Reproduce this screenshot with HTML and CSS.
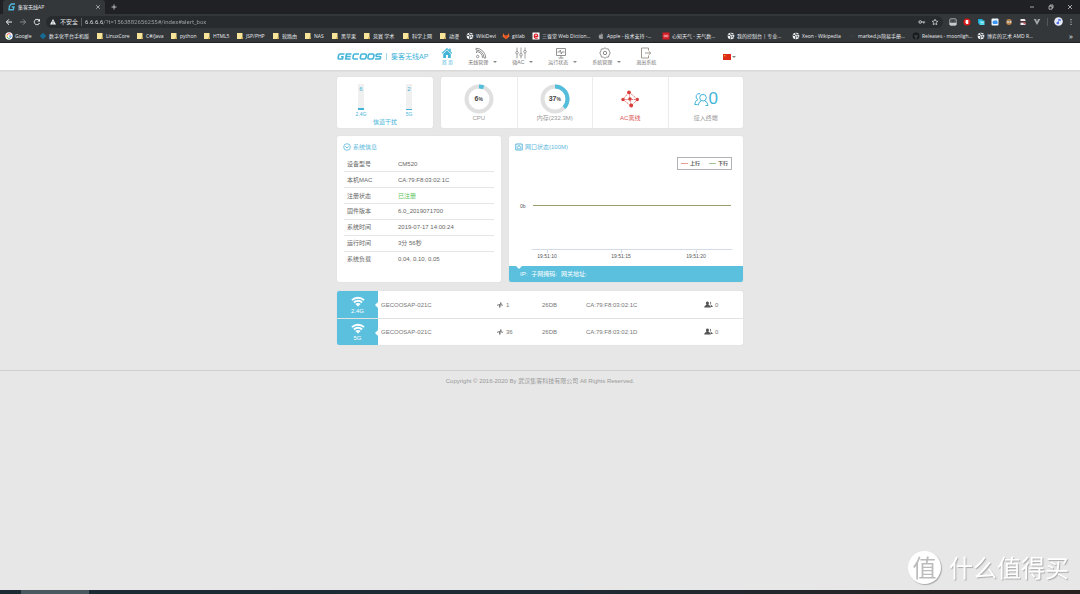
FILE: index.html
```html
<!DOCTYPE html>
<html lang="zh-CN">
<head>
<meta charset="utf-8">
<title>集客无线AP</title>
<link rel="stylesheet" href="styles.css">
</head>
<body>
<svg class="defs" aria-hidden="true">
  <symbol id="folder" viewBox="0 0 8 8"><path d="M1 1h5.500v6H1z" fill="#f8e59a"/><path d="M5 5.500h2v1.500H5z" fill="#d8b24a"/></symbol>
  <symbol id="globe" viewBox="0 0 8 8"><circle cx="4" cy="4" r="3.300" fill="#f1f3f4"/><path d="M1 3.200l2 .3 1 1.300-.6 1.900M4 1l-.5 1.300 1.700.6L6.800 2.500M5 4.600l1.600.6" stroke="#3a3d41" stroke-width="1" fill="none"/></symbol>
  <symbol id="wifi" viewBox="0 0 14 11"><g fill="none" stroke="#fff" stroke-width="1.900"><path d="M1 4.200a8.500 8.500 0 0 1 12 0"/><path d="M3 6.500a5.600 5.600 0 0 1 8 0"/><path d="M5 8.700a2.800 2.800 0 0 1 4 0"/></g><path d="M5.800 9.300L7 10.700l1.200-1.400a1.700 1.700 0 0 0-2.400 0z" fill="#fff"/></symbol>
  <symbol id="pulse" viewBox="0 0 6 6"><path d="M0 3.200h1.400L2.300 2l.5 3.500L3.800.5l.6 2.700H6" fill="none" stroke="#666" stroke-width=".8"/></symbol>
  <symbol id="people" viewBox="0 0 9 7"><path d="M6 .8c1.200 0 1.500 1.600.8 2.600.2.800 1.900.9 2 2.600H7" fill="#555"/><path d="M3.400.4c1.600 0 2 2 1 3.200.2.900 2.400 1 2.600 3H.2c.1-2 2-2.100 2.300-3C1.400 2.400 1.900.4 3.400.4z" fill="#555"/></symbol>
</svg>

<div class="tabs">
  <div class="tab">
    <svg class="tab-icon" viewBox="0 0 8 8"><path d="M7 1H3.500L1.500 3 1 6.800h4.300L6 4H3.700" fill="none" stroke="#4fb8dd" stroke-width="1.400"/></svg>
    <span class="tab-title">集客无线AP</span>
    <button class="plain" aria-label="关闭标签"><svg viewBox="0 0 6 6" width="6" height="6"><path d="M1.200 1.200l3.600 3.600M4.800 1.200L1.200 4.800" stroke="#c5c7ca" stroke-width=".7"/></svg></button>
  </div>
  <button class="plain new-tab" aria-label="新标签"><svg viewBox="0 0 6 6" width="6" height="6"><path d="M3 .5v5M.5 3h5" stroke="#dfe1e3" stroke-width=".8"/></svg></button>
  <div class="window-buttons">
    <button class="plain" aria-label="最小化"><svg viewBox="0 0 6 6" width="6" height="6"><path d="M1 3h4" stroke="#ddd" stroke-width=".7"/></svg></button>
    <button class="plain" aria-label="还原"><svg viewBox="0 0 6 6" width="6" height="6"><path d="M1 2.200h3v3H1zM2 2V1h3v3H4" fill="none" stroke="#ddd" stroke-width=".7"/></svg></button>
    <button class="plain" aria-label="关闭"><svg viewBox="0 0 6 6" width="6" height="6"><path d="M1 1l4 4M5 1L1 5" stroke="#ddd" stroke-width=".7"/></svg></button>
  </div>
</div>

<div class="toolbar">
  <button class="plain" aria-label="后退"><svg viewBox="0 0 8 8" width="8" height="8"><path d="M7 4H1.500M4 1.300L1.300 4 4 6.700" fill="none" stroke="#f1f3f4"/></svg></button>
  <button class="plain" aria-label="前进"><svg viewBox="0 0 8 8" width="8" height="8"><path d="M1 4h5.500M4 1.300L6.700 4 4 6.700" fill="none" stroke="#85898c"/></svg></button>
  <button class="plain" aria-label="刷新"><svg viewBox="0 0 8 8" width="8" height="8"><path d="M6.500 5A2.700 2.700 0 1 1 6 2.200" fill="none" stroke="#f1f3f4"/><path d="M7 .8v2.700H4.300z" fill="#f1f3f4"/></svg></button>
  <label class="address">
    <svg viewBox="0 0 8 8" width="8" height="8"><path d="M4 1l3 5.500H1z" fill="#f1f3f4"/><path d="M4 3v1.700M4 5.200V6" stroke="#333" stroke-width=".6"/></svg>
    <span class="insecure">不安全</span>
    <input class="url" type="text" value="6.6.6.6/?t=1563882656255#/index#alert_box">
    <svg viewBox="0 0 8 8" width="8" height="8"><circle cx="2.200" cy="4" r="1.300" fill="none" stroke="#d5d7d9" stroke-width=".9"/><path d="M3.500 4h3.700M5.800 4v1.500" stroke="#d5d7d9" stroke-width=".9"/></svg>
    <svg viewBox="0 0 8 8" width="8" height="8"><path d="M4 1.200l.9 1.900 2 .2-1.500 1.400.4 2L4 5.700l-1.800 1 .4-2L1.100 3.300l2-.2z" fill="none" stroke="#e0e2e4" stroke-width=".7"/></svg>
  </label>
  <div class="extensions">
    <svg viewBox="0 0 8 8"><rect x=".8" y=".8" width="6.400" height="6.400" rx="1" fill="none" stroke="#c8cacc" stroke-width=".8"/><path d="M1 5h6v2H1zM2.500 3h.8M4.800 3h.8" fill="#c8cacc" stroke="#c8cacc" stroke-width=".7"/></svg>
    <svg viewBox="0 0 8 8"><circle cx="4" cy="4" r="3.500" fill="#df1818"/><path d="M2.700 2h2.600v4H3.400L2.500 4.500" fill="#fff"/></svg>
    <svg viewBox="0 0 8 8"><path d="M1 1h4.500v4.500H1z" fill="#19a9d9"/><path d="M2.500 2.500h5V7h-5z" fill="#55d8ee"/><path d="M4 4.500h2.500" stroke="#fff" stroke-width=".6"/></svg>
    <svg viewBox="0 0 8 8"><rect x=".5" y=".5" width="7" height="7" rx="1" fill="#eef6ff"/><circle cx="3.300" cy="4.200" r="1.700" fill="#3995ef"/><circle cx="5" cy="3.700" r="1.500" fill="#3995ef"/><path d="M2 4h4.500v2H2z" fill="#3995ef"/></svg>
    <svg viewBox="0 0 8 8"><circle cx="4" cy="4" r="2.900" fill="#b98346"/><path d="M1.300 3.500h5.400" stroke="#556ca0"/><circle cx="3" cy="4" r=".9" fill="#e9dcc6"/><circle cx="5.300" cy="4" r=".9" fill="#e9dcc6"/></svg>
    <svg viewBox="0 0 8 8"><path d="M1.500 1h4l1 1v5h-5z" fill="#eee"/><path d="M1 3h6v1.700H1z" fill="#553038"/><path d="M4.500 5.700h2" stroke="#d33"/></svg>
    <svg viewBox="0 0 8 8"><path d="M.7 1h2L4 3.500 5.300 1h2L4 7z" fill="#a9adaf"/><path d="M2.700 1L4 3.300 5.300 1z" fill="#565b5e"/></svg>
  </div>
  <svg class="avatar" viewBox="0 0 9 9"><circle cx="4.500" cy="4.500" r="4.300" fill="#e7ebf7"/><path d="M4.600 6V2l2 .5v1.300l-1.400-.3" fill="#4a6de0" stroke="#4a6de0" stroke-width=".4"/><circle cx="3.800" cy="6" r="1.300" fill="#4a6de0"/></svg>
  <button class="plain" aria-label="菜单"><svg viewBox="0 0 4 8" width="4" height="8"><g fill="#e0e2e4"><circle cx="2" cy="1.700" r=".6"/><circle cx="2" cy="4" r=".6"/><circle cx="2" cy="6.300" r=".6"/></g></svg></button>
</div>

<nav class="bookmarks" aria-label="书签">
  <a href="#"><svg viewBox="0 0 8 8"><circle cx="4" cy="4" r="3.700" fill="#fff"/><g fill="none"><path d="M2 3a2.200 2.200 0 0 1 3.600-.6" stroke="#ea4335"/><path d="M2 3v2" stroke="#fbbc05"/><path d="M2 5a2.200 2.200 0 0 0 3.500.7" stroke="#34a853"/><path d="M4 4h2.200q0 1-.8 1.700" stroke="#4285f4"/></g></svg>Google</a>
  <a href="#"><svg viewBox="0 0 8 8"><path d="M4 .7L7.300 4 4 7.300.7 4z" fill="#176b94"/></svg>数字化平台手机版</a>
  <a href="#"><svg><use href="#folder"/></svg>LinuxCore</a>
  <a href="#"><svg><use href="#folder"/></svg>C#/Java</a>
  <a href="#"><svg><use href="#folder"/></svg>python</a>
  <a href="#"><svg><use href="#folder"/></svg>HTML5</a>
  <a href="#"><svg><use href="#folder"/></svg>JSP/PHP</a>
  <a href="#"><svg><use href="#folder"/></svg>软路由</a>
  <a href="#"><svg><use href="#folder"/></svg>NAS</a>
  <a href="#"><svg><use href="#folder"/></svg>黑苹果</a>
  <a href="#"><svg><use href="#folder"/></svg>竞赛 学术</a>
  <a href="#"><svg><use href="#folder"/></svg>科学上网</a>
  <a href="#"><svg><use href="#folder"/></svg>动漫</a>
  <a href="#"><svg><use href="#globe"/></svg>WikiDevi</a>
  <a href="#"><svg viewBox="0 0 8 8"><path d="M1.500 1l1 2.500h3l1-2.500L7.500 4.500 4 7.300.5 4.500z" fill="#f36c28"/><path d="M2.500 3.500h3L4 7.300z" fill="#df4328"/></svg>gitlab</a>
  <a href="#"><svg viewBox="0 0 8 8"><path d="M.5.500h7v7h-7z" fill="#fff"/><path d="M2.300 4.300H5.700Q5.700 2 4 2T2.300 4.200 4.200 6.200H5.700" fill="none" stroke="#d9202a" stroke-width="1.200"/></svg>三省堂 Web Diction...</a>
  <a href="#"><svg viewBox="0 0 8 8"><path d="M4 2.600c1.200-.7 2-.2 2.200.3-1 .8-.7 1.900.2 2.300C5.600 7.300 5 7 4 6.700 2.600 7.400 1.600 6 1.700 4.300 1.900 2.500 3 2.200 4 2.600zM4 2.200Q4 1 5 .7 5 1.800 4 2.200" fill="#999"/></svg>Apple - 技术支持 -...</a>
  <a href="#"><svg viewBox="0 0 8 8"><path d="M.5.500h7v7h-7z" fill="#d51c24"/><circle cx="2.800" cy="4" r="1" fill="none" stroke="#fff" stroke-width=".5"/><circle cx="5.200" cy="4" r="1" fill="none" stroke="#fff" stroke-width=".5"/></svg>心知天气 - 天气数...</a>
  <a href="#"><svg><use href="#globe"/></svg>我的控制台 | 专业...</a>
  <a href="#"><svg><use href="#globe"/></svg>Xeon - Wikipedia</a>
  <a href="#"><svg viewBox="0 0 8 8"><path d="M1 4h5" stroke="#44474a" stroke-width=".6"/></svg>marked.js简易手册...</a>
  <a href="#"><svg viewBox="0 0 8 8"><circle cx="4" cy="4" r="3.400" fill="#17191b"/><path d="M2.300 2.500l1 .4h1.400l1-.4v2.200L4.800 5.500v1.700H3.200V5.500L2.300 4.700z" fill="#3a3d41"/></svg>Releases - moonligh...</a>
  <a href="#"><svg><use href="#globe"/></svg>博弈的艺术 AMD R...</a>
  <button class="plain more" aria-label="更多书签">»</button>
</nav>

<header class="site-header">
  <div class="container header-row">
    <div class="brand">
      <svg viewBox="0 0 46 9" class="logo" role="img" aria-label="GECOOS"><g fill="none" stroke="#43b4d8" stroke-width="1.600" stroke-linejoin="round">
        <path d="M7.500 2H3.200Q2 2 1.600 3.300L1.200 5.700Q1 7 2.300 7H5.500L6 4.700H4"/>
        <path d="M14.500 2H9.500L8.600 7h5M9.200 4.500h4.500"/>
        <path d="M22 2h-4Q16.600 2 16.300 3.500l-.3 2Q15.800 7 17.200 7h3.700"/>
        <path d="M25.200 2h2.800q1.600 0 1.300 1.600l-.3 1.800Q28.800 7 27.200 7h-2.600q-1.500 0-1.200-1.600l.3-1.800Q23.900 2 25.200 2z"/>
        <path d="M32.800 2h2.800q1.600 0 1.300 1.600l-.3 1.800Q36.400 7 34.800 7h-2.600q-1.500 0-1.200-1.600l.3-1.800Q31.500 2 32.800 2z"/>
        <path d="M45 2h-4.500q-1.200 0-1.400 1.200-.2 1.300 1 1.300H42.500q1.300 0 1.100 1.300Q43.400 7 42.200 7H38"/></g></svg>
      <span class="brand-name">集客无线AP</span>
    </div>
    <nav class="menu" aria-label="主菜单">
      <a href="#" class="active"><svg viewBox="0 0 12 12"><path d="M6 1L.7 6l.8.800L6 2.600l4.500 4.200.8-.8L9.700 4.500V1.600H8.300v1.500z" fill="#43b4d8"/><path d="M6 3.300L2.200 7v4H5V8h2v3h2.800V7z" fill="#43b4d8"/></svg><span>首 页</span></a>
      <a href="#" class="drop"><svg viewBox="0 0 12 12"><g fill="none" stroke="#888" stroke-width=".9"><path d="M1 3V1.200A10 10 0 0 1 10.800 11H9A8 8 0 0 0 1 3M1.500 6V4.500A6.200 6.200 0 0 1 7.500 11"/><circle cx="2.700" cy="9.500" r="1.200"/></g></svg><span>无线管理</span></a>
      <a href="#" class="drop"><svg viewBox="0 0 12 12"><g fill="none" stroke="#888" stroke-width=".8"><path d="M2 .5v4M2 7v4.500M6 .5v6M6 9v2.500M10 .5v3M10 6v5.500"/><circle cx="2" cy="5.700" r="1.300"/><circle cx="6" cy="7.800" r="1.300"/><circle cx="10" cy="4.700" r="1.300"/></g></svg><span>微AC</span></a>
      <a href="#" class="drop"><svg viewBox="0 0 12 12"><path d="M1.500 1.500h9v7h-9zM6 8.500V11M3.500 11h5M2.500 5h2L5.300 3l1 4 .8-2h2.400" fill="none" stroke="#888" stroke-width=".9"/></svg><span>运行状态</span></a>
      <a href="#" class="drop"><svg viewBox="0 0 12 12"><g fill="none" stroke="#888"><path d="M6 .8l1.600 1 1.900.2.600 1.900L11.200 6l-1.100 2-.6 2-1.900.2L6 11.200l-1.600-1L2.500 10l-.6-2L.8 6l1.100-2.100L2.500 2l1.900-.2z" stroke-width=".9"/><circle cx="6" cy="6" r="1.700"/></g></svg><span>系统管理</span></a>
      <a href="#"><svg viewBox="0 0 12 12"><path d="M8.500 3.500V1h-7v10h7V8.500M5 6h5.500M8.800 4.200L10.700 6 8.800 7.800" fill="none" stroke="#9a8f84" stroke-width=".9"/></svg><span>退出系统</span></a>
    </nav>
    <button class="plain language" aria-label="语言"><svg viewBox="0 0 8 6" width="8" height="6"><path d="M0 0h8v6H0z" fill="#dc2b18"/><circle cx="1.700" cy="1.700" r=".7" fill="#f8b51c"/><path d="M3 1h.5M3.500 2.500H4" stroke="#f8b51c" stroke-width=".3"/></svg></button>
  </div>
</header>

<main class="container content">
  <section class="overview">
    <div class="card channel">
      <div class="meters">
        <div class="meter"><div class="bar"><b>6</b><i style="height:2px"></i></div><span>2.4G</span></div>
        <div class="meter"><div class="bar"><b>2</b><i style="height:1px"></i></div><span>5G</span></div>
      </div>
      <p>信道干扰</p>
    </div>
    <div class="card stats">
      <div class="stat"><div class="ring"><svg viewBox="0 0 30 30"><circle cx="15" cy="15" r="12.500" class="track"/><circle cx="15" cy="15" r="12.500" class="value" pathLength="100" stroke-dasharray="6 94"/></svg><span>6<small>%</small></span></div><p>CPU</p></div>
      <div class="stat"><div class="ring"><svg viewBox="0 0 30 30"><circle cx="15" cy="15" r="12.500" class="track"/><circle cx="15" cy="15" r="12.500" class="value" pathLength="100" stroke-dasharray="37 63"/></svg><span>37<small>%</small></span></div><p>内存(232.3M)</p></div>
      <div class="stat offline"><div class="ring"><svg viewBox="0 0 30 30"><path d="M14 8L22.500 15.500 16 22 8 15.500zM8 15.500h14M14 8l1 7.500 1 6" fill="none" stroke="#d9534f" stroke-width=".8" stroke-dasharray="1.500 .7"/><g fill="#d9403c"><circle cx="14" cy="8.300" r="1.900"/><circle cx="22.300" cy="15.500" r="1.700"/><circle cx="16.200" cy="21.500" r="1.900"/><circle cx="8" cy="15.500" r="1.700"/><circle cx="15" cy="15" r="1.800"/></g></svg></div><p>AC离线</p></div>
      <div class="stat clients"><div class="ring count"><svg viewBox="0 0 15 14"><g fill="none" stroke="#43b4d8"><path d="M6.300 1.800A2.900 2.900 0 1 0 4 7.500M4 7.500Q1 8.500.7 12.500H3.500"/><circle cx="9" cy="5.700" r="3.300"/><path d="M4.200 13.500Q4.500 9.800 7.500 8.700M10.500 8.700Q13.800 9.800 14 13.500H11.500"/></g></svg><span>0</span></div><p>接入终端</p></div>
    </div>
  </section>

  <section class="panels">
    <div class="card info">
      <h2><svg viewBox="0 0 8 8"><circle cx="4" cy="4" r="3.300" fill="none" stroke="#5bb8dc" stroke-width=".8"/><path d="M2.400 3.300L4 5l1.600-1.700" fill="none" stroke="#5bb8dc" stroke-width=".9"/></svg>系统信息</h2>
      <table>
        <tr><th scope="row">设备型号</th><td>CM520</td></tr>
        <tr><th scope="row">本机MAC</th><td>CA:79:F8:03:02:1C</td></tr>
        <tr><th scope="row">注册状态</th><td class="ok">已注册</td></tr>
        <tr><th scope="row">固件版本</th><td>6.0_2019071700</td></tr>
        <tr><th scope="row">系统时间</th><td>2019-07-17 14:00:24</td></tr>
        <tr><th scope="row">运行时间</th><td>3分 56秒</td></tr>
        <tr><th scope="row">系统负载</th><td>0.04, 0.10, 0.05</td></tr>
      </table>
    </div>
    <div class="card port">
      <h2><svg viewBox="0 0 8 8"><path d="M.8 1h6.400v6H.8z" fill="none" stroke="#5bb8dc"/><path d="M2.300 5.700v-2h1V2.500h1.400v1.200h1v2z" fill="none" stroke="#5bb8dc" stroke-width=".7"/></svg>网口状态(100M)</h2>
      <svg class="chart" viewBox="0 0 234 109" role="img" aria-label="网口流量">
        <rect x="168.500" y=".5" width="54" height="12" fill="#fff" stroke="#a9abb0" stroke-width=".9"/>
        <path d="M172 6.500h7" stroke="#e89a94"/><path d="M200 6.500h7" stroke="#9ec891"/>
        <text x="181" y="8" class="legend">上行</text><text x="209" y="8" class="legend">下行</text>
        <text x="11" y="51">0b</text>
        <path d="M24 48.500h198" stroke="#9c9c6c"/>
        <path d="M23 92.500h200M38.500 92v4M112.500 92v4M187.500 92v4" stroke="#d3daea" fill="none"/>
        <g text-anchor="middle"><text x="38" y="101">19:51:10</text><text x="112" y="101">19:51:15</text><text x="187" y="101">19:51:20</text></g>
      </svg>
      <div class="port-foot"><span>IP:</span><span>子网掩码:</span><span>网关地址:</span></div>
    </div>
  </section>

  <table class="card radios">
    <tr><th scope="row"><svg><use href="#wifi"/></svg>2.4G</th><td>GECOOSAP-021C</td><td><svg class="pulse"><use href="#pulse"/></svg>1</td><td>26DB</td><td>CA:79:F8:03:02:1C</td><td><svg class="people"><use href="#people"/></svg>0</td></tr>
    <tr><th scope="row"><svg><use href="#wifi"/></svg>5G</th><td>GECOOSAP-021C</td><td><svg class="pulse"><use href="#pulse"/></svg>36</td><td>26DB</td><td>CA:79:F8:03:02:1D</td><td><svg class="people"><use href="#people"/></svg>0</td></tr>
  </table>
</main>

<footer class="site-footer">Copyright © 2016-2020 By 武汉集客科技有限公司 All Rights Reserved.</footer>

<div class="watermark"><span class="seal">值</span><span>什么值得买</span></div>
<div class="taskbar"><span></span></div>
</body>
</html>
```
FILE: styles.css
```css
* { box-sizing: border-box; }

body {
  margin: 0;
  min-height: 100vh;
  display: flex;
  flex-direction: column;
  background: #e7e7e7;
  color: #777;
  font: 6px/8px "Liberation Sans", "Noto Sans CJK SC", sans-serif;
  overflow: hidden;
}

a { color: inherit; text-decoration: none; }
svg { display: block; flex: none; }
p, h2 { margin: 0; font-size: 6px; font-weight: 400; }
.defs { position: absolute; width: 0; height: 0; }
.plain { border: 0; padding: 0; background: none; color: inherit; font: inherit; display: flex; align-items: center; }

/* Browser frame */
.tabs, .toolbar, .bookmarks {
  font: 5px/8px "Open Sans", "Noto Sans CJK SC", sans-serif;
  color: #e8eaed;
  display: flex;
  align-items: center;
}
.tabs { height: 14px; background: #202124; }
.tab { width: 102px; height: 14px; margin-left: 3px; padding: 0 4px 0 5px; background: #33373a; border-radius: 3px 3px 0 0; display: flex; align-items: center; }
.tab-icon { width: 8px; height: 8px; }
.tab-title { flex: 1; padding-left: 2px; }
.new-tab { margin-left: 6px; }
.window-buttons { margin-left: auto; padding-right: 7px; display: flex; gap: 13px; }

.toolbar { height: 15px; padding: 0 7px 0 5px; gap: 6px; background: #33373a; }
.address { flex: 1; height: 12px; padding: 0 4px 0 3px; margin-left: -1px; background: #272b2e; border-radius: 6px; display: flex; align-items: center; gap: 5px; }
.insecure { font-size: 6px; margin-left: -2px; }
.url {
  flex: 1;
  min-width: 0;
  height: 8px;
  margin-left: -2px;
  border: 0;
  border-left: 1px solid #5b5f62;
  padding: 0 0 0 3px;
  outline: 0;
  background: linear-gradient(90deg, #f1f3f4 21px, #a0a4a7 21px);
  background-clip: text;
  -webkit-background-clip: text;
  color: transparent;
  font: 6px/8px Roboto, sans-serif;
}
.extensions { display: flex; gap: 6px; padding-right: 6px; border-right: 1px solid #53575a; }
.extensions svg { width: 8px; height: 8px; }
.avatar { width: 9px; height: 9px; }

.bookmarks {
  height: 14px;
  padding-left: 5px;
  background: #33373a;
  border-bottom: 1px solid #202124;
  display: grid;
  grid-template-columns: 34px 57px 40px 34px 33px 33px 36px 32px 27px 32px 39px 37px 27px 36px 30px 65px 65px 65px 65px 56px 64px 65px 1fr auto;
  white-space: nowrap;
}
.bookmarks a { display: flex; align-items: center; gap: 2px; }
.bookmarks svg { width: 8px; height: 8px; }
.more { padding-right: 7px; font-size: 8px; }

/* Page header */
.container { width: 406px; max-width: 100%; margin: 0 auto; }
.site-header { background: #fff; border-bottom: 1px solid #d9d9d9; box-shadow: 0 1px 0 #e0e0e0; }
.header-row { height: 27px; display: flex; align-items: center; }
.brand { display: flex; align-items: center; gap: 3px; color: #43b4d8; }
.logo { width: 46px; height: 9px; }
.brand-name { padding-left: 4px; border-left: 1px solid #a5d8ea; font-size: 7px; line-height: 7px; }
.menu { display: flex; gap: 15px; margin-left: 13px; font-size: 5px; line-height: 7px; }
.menu a { display: flex; flex-direction: column; align-items: center; white-space: nowrap; }
.menu svg { width: 12px; height: 12px; }
.menu .active { color: #43b4d8; }
.drop svg { margin-right: 4px; }
.drop span::after, .language::after { content: ""; display: inline-block; border: 2px solid transparent; border-top-color: #888; border-bottom: 0; margin-left: 5px; vertical-align: 1px; }
.language { margin-left: auto; padding-right: 7px; }
.language::after { margin-left: 1px; }

/* Cards */
.content { padding-top: 6px; display: flex; flex-direction: column; gap: 8px; }
.card { background: #fff; border-radius: 2px; box-shadow: 0 0 1px #ccc; }
.overview { display: grid; grid-template-columns: 96px 1fr; gap: 8px; }
.channel { padding: 7px 12px 2px; color: #43b4d8; text-align: center; }
.meters { display: flex; justify-content: space-between; }
.meter { width: 24px; display: flex; flex-direction: column; align-items: center; font-size: 5px; line-height: 8px; }
.bar { width: 6px; height: 26px; display: flex; flex-direction: column; justify-content: space-between; background: #f0f0f0; }
.bar b { font-size: 6px; font-weight: 400; line-height: 10px; }
.bar i { background: #43b4d8; }
.channel p { line-height: 8px; }
.stats { display: grid; grid-template-columns: repeat(4, 1fr); }
.stat { padding: 7px 0 4px; text-align: center; color: #999; }
.stat + .stat { border-left: 1px solid #ececec; }
.ring { height: 30px; display: grid; place-items: center; }
.ring > * { grid-area: 1 / 1; }
.ring svg { width: 30px; height: 30px; }
.ring circle.track, .ring circle.value { fill: none; stroke: #e0e0e0; stroke-width: 4; }
.ring circle.value { stroke: #53bddc; transform: rotate(-90deg); transform-origin: center; }
.ring span { color: #444; font-size: 7px; font-weight: 700; }
.ring small { font-size: 5px; }
.stat p { line-height: 8px; }
.stat.offline { color: #d9534f; }
.ring.count { display: flex; justify-content: center; align-items: center; }
.ring.count svg { width: 15px; height: 14px; }
.ring.count span { font-size: 17px; font-weight: 400; color: #43b4d8; }

.panels { display: grid; grid-template-columns: 164px 1fr; gap: 8px; }
.card h2 { display: flex; align-items: center; gap: 2px; padding: 7px 6px 6px; color: #5bb8dc; }
.card h2 svg { width: 8px; height: 8px; }
.info { padding-bottom: 16px; }
.info table { width: calc(100% - 14px); height: 109px; margin-left: 7px; border-collapse: collapse; color: #666; }
.info th { width: 54px; padding: 0 3px; font-weight: 400; text-align: left; }
.info td { padding: 0; }
.info tr + tr { border-top: 1px solid #e6e6e6; }
.info .ok { color: #5cc45c; }
.port { display: flex; flex-direction: column; overflow: hidden; }
.chart { width: 100%; fill: #555; font-size: 5px; }
.legend { font-weight: 700; }
.port-foot { position: relative; margin-top: auto; height: 16px; padding: 0 11px; display: flex; align-items: center; gap: 4px; background: #5bc0de; color: #fff; }
.port-foot::before { content: ""; position: absolute; top: 0; left: 7px; border: 3px solid transparent; border-top-color: #fff; border-bottom: 0; }

.radios { width: 100%; margin-top: 1px; border-spacing: 0; overflow: hidden; table-layout: fixed; }
.radios th { position: relative; width: 41px; height: 27px; padding: 0; background: #5bc0de; color: #fff; font-weight: 400; }
.radios th::after { content: ""; position: absolute; top: 11px; right: 0; border: 3px solid transparent; border-right-color: #fff; border-left: 0; }
.radios th svg { width: 14px; height: 11px; margin: 1px auto 0; }
.radios td { padding: 0 3px; white-space: nowrap; }
.radios td:nth-child(2) { width: 116px; }
.radios td:nth-child(3) { width: 45px; }
.radios td:nth-child(4) { width: 44px; }
.radios td:nth-child(5) { width: 118px; }
.radios td svg { display: inline-block; vertical-align: -1px; margin-right: 3px; }
.radios td svg.people { margin-right: 2px; }
.radios tr + tr > * { border-top: 1px solid #e2e2e2; }
.pulse { width: 6px; height: 6px; }
.people { width: 9px; height: 7px; }

.site-footer { margin-top: 25px; padding-top: 6px; border-top: 1px solid #d0d0d0; text-align: center; color: #999; }

/* Overlays */
.watermark { position: fixed; right: 11px; bottom: 10px; display: flex; align-items: center; gap: 8px; color: #fff; font: 400 24px/34px "Noto Sans CJK SC", sans-serif; text-shadow: 1px 1px 1px #aaa; }
.seal { width: 33px; height: 33px; border-radius: 50%; background: #fff; color: #bbb; text-align: center; line-height: 32px; text-shadow: none; box-shadow: 1px 1px 1px #aaa; }
.taskbar { position: fixed; left: 0; right: 0; bottom: 0; height: 4px; padding-left: 21px; background: linear-gradient(90deg, #1b2a33, #1e2b35 50%, #29211f); }
.taskbar span { display: block; width: 68px; height: 4px; background: #4a5860; }
```
